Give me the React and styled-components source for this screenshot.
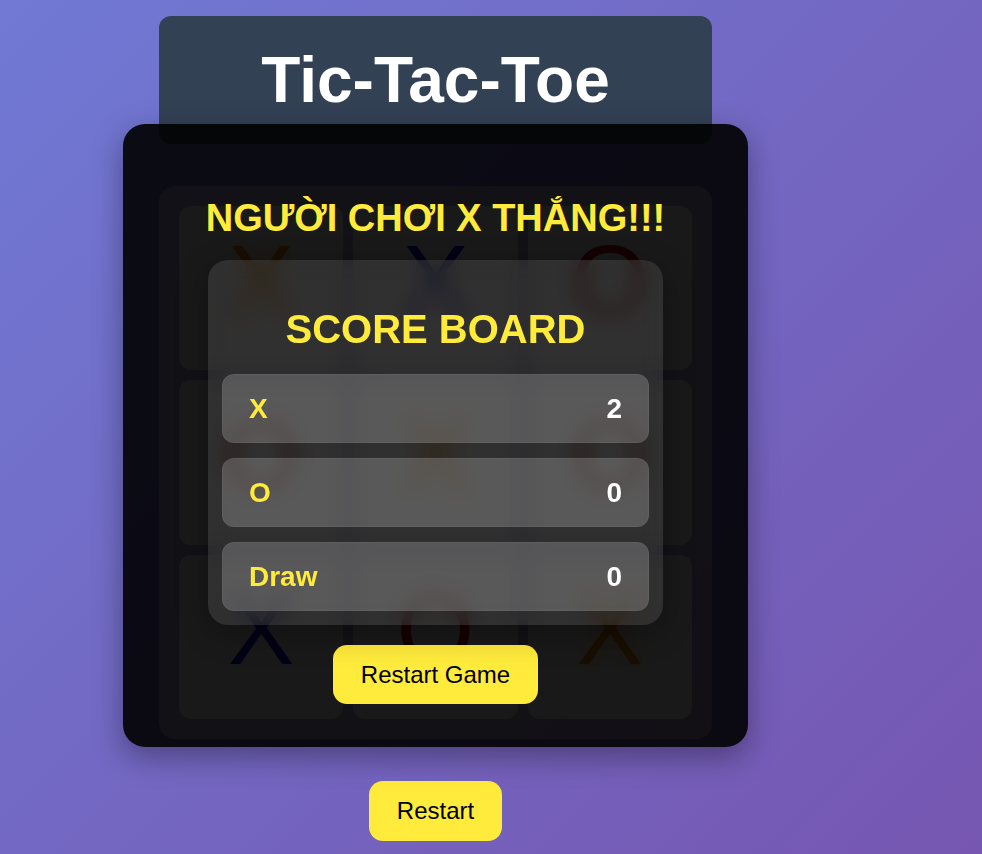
import React from "react"
import styled, { createGlobalStyle } from "styled-components"

const GlobalStyle = createGlobalStyle`
  html, body {
    margin: 0;
    padding: 0;
    min-height: 100%;
  }
  body {
    min-height: 100vh;
    background: linear-gradient(135deg, #7079d4 0%, #7656b1 100%);
    font-family: "Liberation Sans", Arial, sans-serif;
  }
`

const board = [
  ["X", "X", "O"],
  ["O", "X", "O"],
  ["X", "O", "X"],
]
const winLine = ["0-0", "1-1", "2-2"]

const scores = [
  { label: "X", value: 2 },
  { label: "O", value: 0 },
  { label: "Draw", value: 0 },
]

function App() {
  return (
    <>
      <GlobalStyle />
      <Main>
        <Header>
          <Title>Tic-Tac-Toe</Title>
        </Header>
        <GameArea>
          <Board>
            {board.map((row, r) =>
              row.map((mark, c) => {
                const win = winLine.includes(`${r}-${c}`)
                return (
                  <Cell key={`${r}-${c}`} $mark={mark} $win={win}>
                    {mark}
                  </Cell>
                )
              })
            )}
          </Board>
          <Overlay>
            <WinText>NGƯỜI CHƠI X THẮNG!!!</WinText>
            <ScoreCard>
              <CardTitle>SCORE BOARD</CardTitle>
              {scores.map((s) => (
                <ScoreRow key={s.label}>
                  <ScoreLabel>{s.label}</ScoreLabel>
                  <ScoreValue>{s.value}</ScoreValue>
                </ScoreRow>
              ))}
            </ScoreCard>
            <YellowButton>Restart Game</YellowButton>
          </Overlay>
        </GameArea>
        <YellowButton $tall>Restart</YellowButton>
      </Main>
    </>
  )
}

const Main = styled.div`
  width: 871px;
  display: flex;
  flex-direction: column;
  align-items: center;
  gap: 42px;
  padding-top: 16px;
`

const Header = styled.div`
  width: 553px;
  box-sizing: border-box;
  padding: 27px 0;
  background: #334155;
  border-radius: 12px;
  text-align: center;
`

const Title = styled.h1`
  margin: 0;
  color: #fff;
  font-size: 64px;
  line-height: 74px;
  font-weight: bold;
`

const GameArea = styled.div`
  position: relative;
  width: 553px;
`

const Board = styled.div`
  display: grid;
  grid-template-columns: repeat(3, 1fr);
  gap: 10px;
  padding: 20px;
  background: rgba(255, 255, 255, 0.45);
  border-radius: 16px;
`

const Cell = styled.div`
  aspect-ratio: 1;
  box-sizing: border-box;
  padding-bottom: 16px;
  background: #fff;
  border-radius: 12px;
  display: flex;
  align-items: center;
  justify-content: center;
  font-size: 100px;
  line-height: 1;
  color: ${(p) => (p.$win ? "#f08c00" : p.$mark === "X" ? "#1414d0" : "#c80000")};
  text-shadow: ${(p) => (p.$win ? "0 0 20px rgba(255, 152, 0, 0.6)" : "none")};
`

const Overlay = styled.div`
  position: absolute;
  inset: -62px -36px -8px -36px;
  z-index: 2;
  box-sizing: border-box;
  padding-top: 72px;
  display: flex;
  flex-direction: column;
  align-items: center;
  gap: 20px;
  background: rgba(0, 0, 0, 0.9);
  border-radius: 22px;
  box-shadow: 0 10px 30px rgba(0, 0, 0, 0.35);
`

const WinText = styled.h2`
  margin: 0;
  color: #ffeb3b;
  font-size: 38px;
  line-height: 44px;
  font-weight: bold;
`

const ScoreCard = styled.div`
  width: 455px;
  box-sizing: border-box;
  padding: 14px;
  display: flex;
  flex-direction: column;
  gap: 15px;
  background: rgba(255, 255, 255, 0.1);
  backdrop-filter: blur(10px);
  border-radius: 20px;
  box-shadow: 0 8px 32px rgba(0, 0, 0, 0.3);
`

const CardTitle = styled.h2`
  margin: 33px 0 8px;
  text-align: center;
  color: #ffeb3b;
  font-size: 40px;
  line-height: 44px;
  font-weight: bold;
`

const ScoreRow = styled.div`
  height: 69px;
  box-sizing: border-box;
  padding: 0 26px;
  display: flex;
  align-items: center;
  justify-content: space-between;
  background: rgba(255, 255, 255, 0.2);
  border: 1px solid rgba(255, 255, 255, 0.04);
  border-radius: 12px;
  font-size: 28px;
  font-weight: bold;
`

const ScoreLabel = styled.span`
  color: #ffeb3b;
`

const ScoreValue = styled.span`
  color: #fff;
`

const YellowButton = styled.button`
  height: ${(p) => (p.$tall ? "60px" : "59px")};
  padding: 0 28px;
  border: none;
  border-radius: 14px;
  background: #ffeb3b;
  color: #000;
  font-family: "Liberation Sans", Arial, sans-serif;
  font-size: 24px;
  cursor: pointer;
`

export default App
